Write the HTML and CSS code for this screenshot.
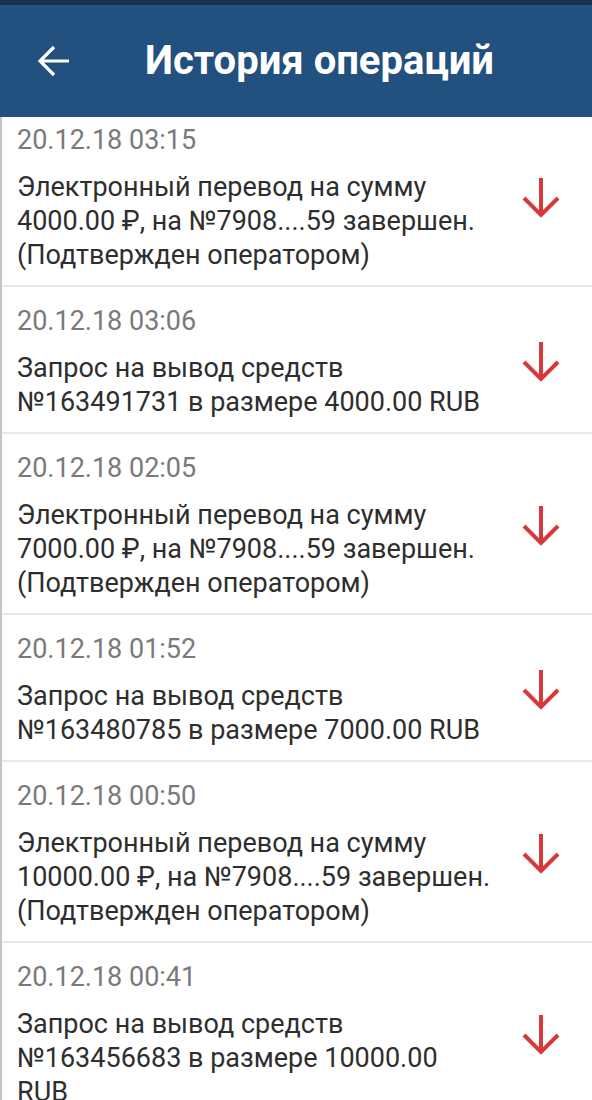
FILE: index.html
```html
<!DOCTYPE html>
<html lang="ru">
<head>
  <meta charset="utf-8">
  <meta name="viewport" content="width=device-width, initial-scale=1">
  <title>История операций</title>
  <link rel="stylesheet" href="styles.css">
</head>
<body>
  <div class="status-bar"></div>
  <div class="header">
    <svg class="back" width="34" height="34" viewBox="0 0 34 34">
      <path d="M32 17H3M17 3L3 17l14 14" fill="none" stroke="#fff" stroke-width="3.2"/>
    </svg>
    <h1 class="title">История операций</h1>
  </div>

  <div class="list">
    <div class="item first">
      <div class="info">
        <div class="date">20.12.18 03:15</div>
        <div class="text">Электронный перевод на сумму 4000.00 ₽, на №7908....59 завершен. (Подтвержден оператором)</div>
      </div>
      <svg class="arrow" viewBox="0 0 40 40"><path d="M20 0v37M3 20l17 17 17-17" fill="none" stroke="#d7393b" stroke-width="4"/></svg>
    </div>
    <div class="item">
      <div class="info">
        <div class="date">20.12.18 03:06</div>
        <div class="text">Запрос на вывод средств №163491731 в размере 4000.00 RUB</div>
      </div>
      <svg class="arrow" viewBox="0 0 40 40"><path d="M20 0v37M3 20l17 17 17-17" fill="none" stroke="#d7393b" stroke-width="4"/></svg>
    </div>
    <div class="item">
      <div class="info">
        <div class="date">20.12.18 02:05</div>
        <div class="text">Электронный перевод на сумму 7000.00 ₽, на №7908....59 завершен. (Подтвержден оператором)</div>
      </div>
      <svg class="arrow" viewBox="0 0 40 40"><path d="M20 0v37M3 20l17 17 17-17" fill="none" stroke="#d7393b" stroke-width="4"/></svg>
    </div>
    <div class="item">
      <div class="info">
        <div class="date">20.12.18 01:52</div>
        <div class="text">Запрос на вывод средств №163480785 в размере 7000.00 RUB</div>
      </div>
      <svg class="arrow" viewBox="0 0 40 40"><path d="M20 0v37M3 20l17 17 17-17" fill="none" stroke="#d7393b" stroke-width="4"/></svg>
    </div>
    <div class="item">
      <div class="info">
        <div class="date">20.12.18 00:50</div>
        <div class="text">Электронный перевод на сумму 10000.00 ₽, на №7908....59 завершен. (Подтвержден оператором)</div>
      </div>
      <svg class="arrow" viewBox="0 0 40 40"><path d="M20 0v37M3 20l17 17 17-17" fill="none" stroke="#d7393b" stroke-width="4"/></svg>
    </div>
    <div class="item">
      <div class="info">
        <div class="date">20.12.18 00:41</div>
        <div class="text">Запрос на вывод средств №163456683 в размере 10000.00 RUB</div>
      </div>
      <svg class="arrow" viewBox="0 0 40 40"><path d="M20 0v37M3 20l17 17 17-17" fill="none" stroke="#d7393b" stroke-width="4"/></svg>
    </div>
  </div>
</body>
</html>
```

FILE: styles.css
```css
body{
  margin: 0;
  font-family: Roboto, "Noto Sans", sans-serif;
  background: #fff;
  overflow: hidden;
  height: 1100px;
}
.status-bar{
  height: 5px;
  background: #17324f;
}
.header{
  height: 112px;
  background: #22507f;
  display: flex;
  align-items: center;
  padding-left: 37px;
}
.back{
  flex: none;
}
.title{
  margin: 0 0 0 74px;
  color: #fff;
  font-size: 40px;
  font-weight: 700;
  line-height: 1;
}
.list{
  border-left: 2px solid #c4c4c4;
}
.item{
  display: flex;
  align-items: center;
  padding: 17px 0 13px 15px;
  border-bottom: 2px solid #e8e8e8;
}
.item.first{
  padding-top: 6px;
}
.info{
  width: 476px;
}
.date{
  font-size: 27px;
  line-height: 34px;
  color: #7a7a7a;
  margin-bottom: 13px;
}
.text{
  font-size: 27px;
  line-height: 34px;
  color: #2e2e2e;
}
.arrow{
  width: 40px;
  height: 40px;
  margin-left: 28px;
  flex: none;
}
```
